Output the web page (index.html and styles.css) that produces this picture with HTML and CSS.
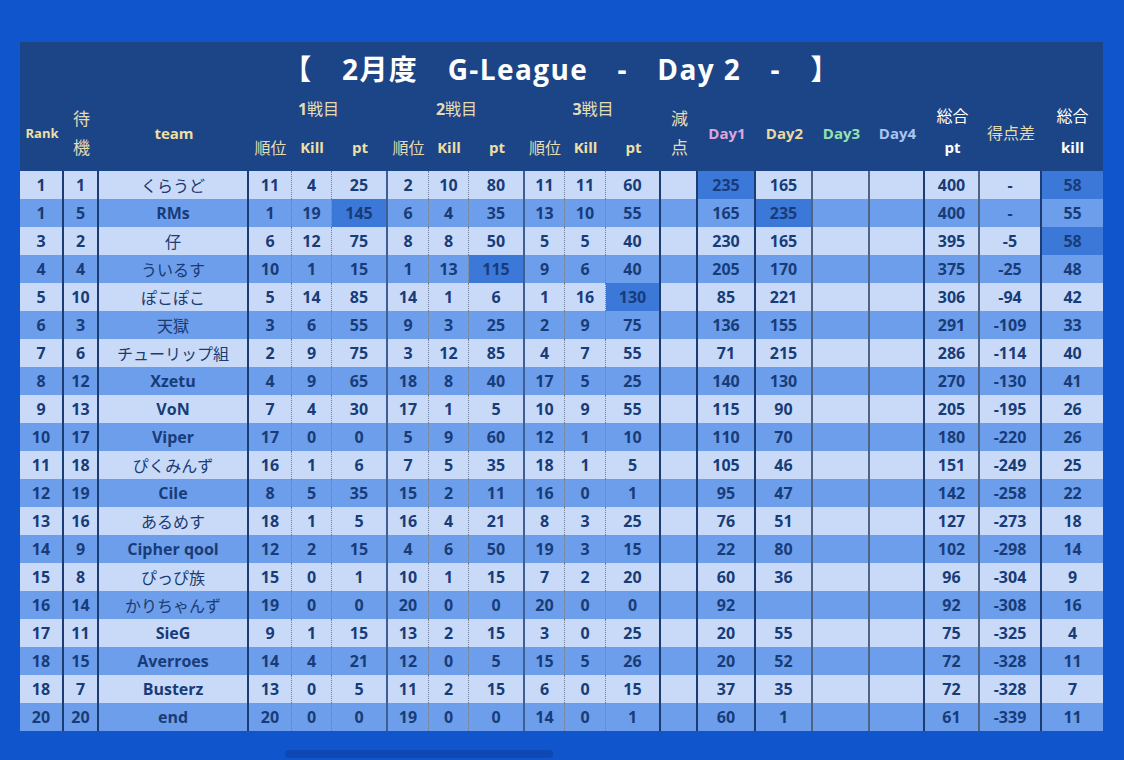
FILE: index.html
```html
<!DOCTYPE html>
<html lang="ja">
<head>
<meta charset="utf-8">
<title>2月度 G-League Day 2</title>
<link rel="stylesheet" href="styles.css">
</head>
<body>
<div class="sheet">
<table class="board">
<colgroup>
<col style="width:44px"><col style="width:35px"><col style="width:150px">
<col style="width:43px"><col style="width:40px"><col style="width:56px">
<col style="width:41px"><col style="width:40px"><col style="width:56px">
<col style="width:40px"><col style="width:41px"><col style="width:55px">
<col style="width:37px"><col style="width:58px"><col style="width:57px"><col style="width:57px"><col style="width:55px">
<col style="width:55px"><col style="width:62px"><col style="width:61px">
</colgroup>
<thead>
<tr class="title-row"><th colspan="20" class="title">【　2月度　G-League　-　Day 2　-　】</th></tr>
<tr class="head-top">
<th rowspan="2" class="h-rank">Rank</th>
<th rowspan="2" class="h-jp h-two">待<br>機</th>
<th rowspan="2" class="h-team">team</th>
<th colspan="3" class="h-round"><span class="num">1</span>戦目</th>
<th colspan="3" class="h-round"><span class="num">2</span>戦目</th>
<th colspan="3" class="h-round"><span class="num">3</span>戦目</th>
<th rowspan="2" class="h-jp h-two">減<br>点</th>
<th rowspan="2" class="h-day d1">Day1</th>
<th rowspan="2" class="h-day d2">Day2</th>
<th rowspan="2" class="h-day d3">Day3</th>
<th rowspan="2" class="h-day d4">Day4</th>
<th rowspan="2" class="h-total"><span class="jp">総合</span><br>pt</th>
<th rowspan="2" class="h-jp h-diff">得点差</th>
<th rowspan="2" class="h-total"><span class="jp">総合</span><br>kill</th>
</tr>
<tr class="head-sub">
<th class="h-jp">順位</th><th>Kill</th><th>pt</th>
<th class="h-jp">順位</th><th>Kill</th><th>pt</th>
<th class="h-jp">順位</th><th>Kill</th><th>pt</th>
</tr>
</thead>
<tbody>
<tr><td>1</td><td>1</td><td class="jp">くらうど</td><td>11</td><td>4</td><td>25</td><td>2</td><td>10</td><td>80</td><td>11</td><td>11</td><td>60</td><td></td><td class="hi">235</td><td>165</td><td></td><td></td><td>400</td><td>-</td><td class="hi">58</td></tr>
<tr><td>1</td><td>5</td><td>RMs</td><td>1</td><td>19</td><td class="hi">145</td><td>6</td><td>4</td><td>35</td><td>13</td><td>10</td><td>55</td><td></td><td>165</td><td class="hi">235</td><td></td><td></td><td>400</td><td>-</td><td>55</td></tr>
<tr><td>3</td><td>2</td><td class="jp">仔</td><td>6</td><td>12</td><td>75</td><td>8</td><td>8</td><td>50</td><td>5</td><td>5</td><td>40</td><td></td><td>230</td><td>165</td><td></td><td></td><td>395</td><td>-5</td><td class="hi">58</td></tr>
<tr><td>4</td><td>4</td><td class="jp">ういるす</td><td>10</td><td>1</td><td>15</td><td>1</td><td>13</td><td class="hi">115</td><td>9</td><td>6</td><td>40</td><td></td><td>205</td><td>170</td><td></td><td></td><td>375</td><td>-25</td><td>48</td></tr>
<tr><td>5</td><td>10</td><td class="jp">ぽこぽこ</td><td>5</td><td>14</td><td>85</td><td>14</td><td>1</td><td>6</td><td>1</td><td>16</td><td class="hi">130</td><td></td><td>85</td><td>221</td><td></td><td></td><td>306</td><td>-94</td><td>42</td></tr>
<tr><td>6</td><td>3</td><td class="jp">天獄</td><td>3</td><td>6</td><td>55</td><td>9</td><td>3</td><td>25</td><td>2</td><td>9</td><td>75</td><td></td><td>136</td><td>155</td><td></td><td></td><td>291</td><td>-109</td><td>33</td></tr>
<tr><td>7</td><td>6</td><td class="jp">チューリップ組</td><td>2</td><td>9</td><td>75</td><td>3</td><td>12</td><td>85</td><td>4</td><td>7</td><td>55</td><td></td><td>71</td><td>215</td><td></td><td></td><td>286</td><td>-114</td><td>40</td></tr>
<tr><td>8</td><td>12</td><td>Xzetu</td><td>4</td><td>9</td><td>65</td><td>18</td><td>8</td><td>40</td><td>17</td><td>5</td><td>25</td><td></td><td>140</td><td>130</td><td></td><td></td><td>270</td><td>-130</td><td>41</td></tr>
<tr><td>9</td><td>13</td><td>VoN</td><td>7</td><td>4</td><td>30</td><td>17</td><td>1</td><td>5</td><td>10</td><td>9</td><td>55</td><td></td><td>115</td><td>90</td><td></td><td></td><td>205</td><td>-195</td><td>26</td></tr>
<tr><td>10</td><td>17</td><td>Viper</td><td>17</td><td>0</td><td>0</td><td>5</td><td>9</td><td>60</td><td>12</td><td>1</td><td>10</td><td></td><td>110</td><td>70</td><td></td><td></td><td>180</td><td>-220</td><td>26</td></tr>
<tr><td>11</td><td>18</td><td class="jp">ぴくみんず</td><td>16</td><td>1</td><td>6</td><td>7</td><td>5</td><td>35</td><td>18</td><td>1</td><td>5</td><td></td><td>105</td><td>46</td><td></td><td></td><td>151</td><td>-249</td><td>25</td></tr>
<tr><td>12</td><td>19</td><td>Cile</td><td>8</td><td>5</td><td>35</td><td>15</td><td>2</td><td>11</td><td>16</td><td>0</td><td>1</td><td></td><td>95</td><td>47</td><td></td><td></td><td>142</td><td>-258</td><td>22</td></tr>
<tr><td>13</td><td>16</td><td class="jp">あるめす</td><td>18</td><td>1</td><td>5</td><td>16</td><td>4</td><td>21</td><td>8</td><td>3</td><td>25</td><td></td><td>76</td><td>51</td><td></td><td></td><td>127</td><td>-273</td><td>18</td></tr>
<tr><td>14</td><td>9</td><td>Cipher qool</td><td>12</td><td>2</td><td>15</td><td>4</td><td>6</td><td>50</td><td>19</td><td>3</td><td>15</td><td></td><td>22</td><td>80</td><td></td><td></td><td>102</td><td>-298</td><td>14</td></tr>
<tr><td>15</td><td>8</td><td class="jp">ぴっぴ族</td><td>15</td><td>0</td><td>1</td><td>10</td><td>1</td><td>15</td><td>7</td><td>2</td><td>20</td><td></td><td>60</td><td>36</td><td></td><td></td><td>96</td><td>-304</td><td>9</td></tr>
<tr><td>16</td><td>14</td><td class="jp">かりちゃんず</td><td>19</td><td>0</td><td>0</td><td>20</td><td>0</td><td>0</td><td>20</td><td>0</td><td>0</td><td></td><td>92</td><td></td><td></td><td></td><td>92</td><td>-308</td><td>16</td></tr>
<tr><td>17</td><td>11</td><td>SieG</td><td>9</td><td>1</td><td>15</td><td>13</td><td>2</td><td>15</td><td>3</td><td>0</td><td>25</td><td></td><td>20</td><td>55</td><td></td><td></td><td>75</td><td>-325</td><td>4</td></tr>
<tr><td>18</td><td>15</td><td>Averroes</td><td>14</td><td>4</td><td>21</td><td>12</td><td>0</td><td>5</td><td>15</td><td>5</td><td>26</td><td></td><td>20</td><td>52</td><td></td><td></td><td>72</td><td>-328</td><td>11</td></tr>
<tr><td>18</td><td>7</td><td>Busterz</td><td>13</td><td>0</td><td>5</td><td>11</td><td>2</td><td>15</td><td>6</td><td>0</td><td>15</td><td></td><td>37</td><td>35</td><td></td><td></td><td>72</td><td>-328</td><td>7</td></tr>
<tr><td>20</td><td>20</td><td>end</td><td>20</td><td>0</td><td>0</td><td>19</td><td>0</td><td>0</td><td>14</td><td>0</td><td>1</td><td></td><td>60</td><td>1</td><td></td><td></td><td>61</td><td>-339</td><td>11</td></tr>
</tbody>
</table>
<div class="scrollbar"><div class="thumb"></div></div>
</div>
</body>
</html>
```
FILE: styles.css
```css
html, body {
  margin: 0;
  padding: 0;
}
body {
  background: #1155cc;
  font-family: "Open Sans", "DejaVu Sans", sans-serif;
  width: 1124px;
  height: 760px;
  overflow: hidden;
}
.sheet {
  padding: 42px 0 0 20px;
}
.board {
  border-collapse: separate;
  border-spacing: 0;
  table-layout: fixed;
  width: 1083px;
}
.board th,
.board td {
  padding: 0;
  text-align: center;
  vertical-align: middle;
  box-sizing: border-box;
  white-space: nowrap;
  overflow: hidden;
}
.board thead th {
  background: #1c4587;
  color: #eedfa5;
  font-weight: 700;
  font-size: 15px;
}
.title-row .title {
  height: 50px;
  color: #ffffff;
  font-size: 28px;
  font-weight: 700;
  letter-spacing: 1.4px;
  font-family: "Open Sans", "Noto Sans CJK JP", sans-serif;
  padding-top: 2px;
}
.head-top th {
  height: 34px;
}
.head-sub th {
  height: 45px;
  padding-bottom: 3px;
}
.board .h-rank {
  font-size: 13px;
  padding-top: 2px;
}
.board .h-team {
  font-size: 15px;
  padding-top: 2px;
}
.board .h-jp,
.board .jp {
  font-family: "Noto Sans CJK JP", sans-serif;
  font-weight: 400;
}
.board .h-jp {
  font-size: 16px;
  color: #e6dcb4;
}
.board .h-two {
  line-height: 29px;
  font-size: 17px;
}
.board .h-round {
  font-family: "Noto Sans CJK JP", sans-serif;
  font-weight: 400;
  font-size: 16px;
  color: #e6dcb4;
  vertical-align: middle;
  padding-bottom: 2px;
}
.board .h-round .num {
  font-family: "Open Sans", sans-serif;
  font-weight: 700;
}
.board .h-day {
  font-size: 15px;
  padding-top: 2px;
}
.board .d1 { color: #dca6dc; }
.board .d2 { color: #e9d9a0; }
.board .d3 { color: #94e2b2; }
.board .d4 { color: #a9c4f2; }
.board .h-total {
  color: #ffffff;
  font-size: 15px;
  line-height: 31px;
}
.board .h-total .jp {
  font-size: 16px;
}
.board .h-diff {
  font-size: 16px;
}

.board tbody td {
  height: 28px;
  line-height: 28px;
  font-size: 16px;
  font-weight: 700;
  color: #183c78;
  background: #c9daf8;
}
.board tbody tr:nth-child(even) td {
  background: #6d9eeb;
}
.board tbody td.hi,
.board tbody tr:nth-child(even) td.hi {
  background: #3c78d8;
}
.board tbody td.jp {
  font-weight: 400;
  font-size: 16px;
  color: #1a3a70;
}

/* column rules */
.board tbody td:nth-child(1),
.board tbody td:nth-child(2),
.board tbody td:nth-child(3),
.board tbody td:nth-child(12),
.board tbody td:nth-child(13),
.board tbody td:nth-child(14),
.board tbody td:nth-child(17),
.board tbody td:nth-child(19) {
  border-right: 2px solid #1c3d73;
}
.board tbody td:nth-child(6),
.board tbody td:nth-child(9) {
  border-right: 2px solid #3d5f93;
}
.board tbody td:nth-child(15),
.board tbody td:nth-child(16),
.board tbody td:nth-child(18) {
  border-right: 2px solid #4f6384;
}
.board tbody td:nth-child(4),
.board tbody td:nth-child(5),
.board tbody td:nth-child(7),
.board tbody td:nth-child(8),
.board tbody td:nth-child(10),
.board tbody td:nth-child(11) {
  border-right: 1px dotted #6f7f99;
}

.scrollbar {
  width: 1083px;
  height: 8px;
  margin-top: 19px;
}
.thumb {
  margin-left: 265px;
  width: 268px;
  height: 8px;
  border-radius: 4px;
  background: #0e48b2;
}
```
